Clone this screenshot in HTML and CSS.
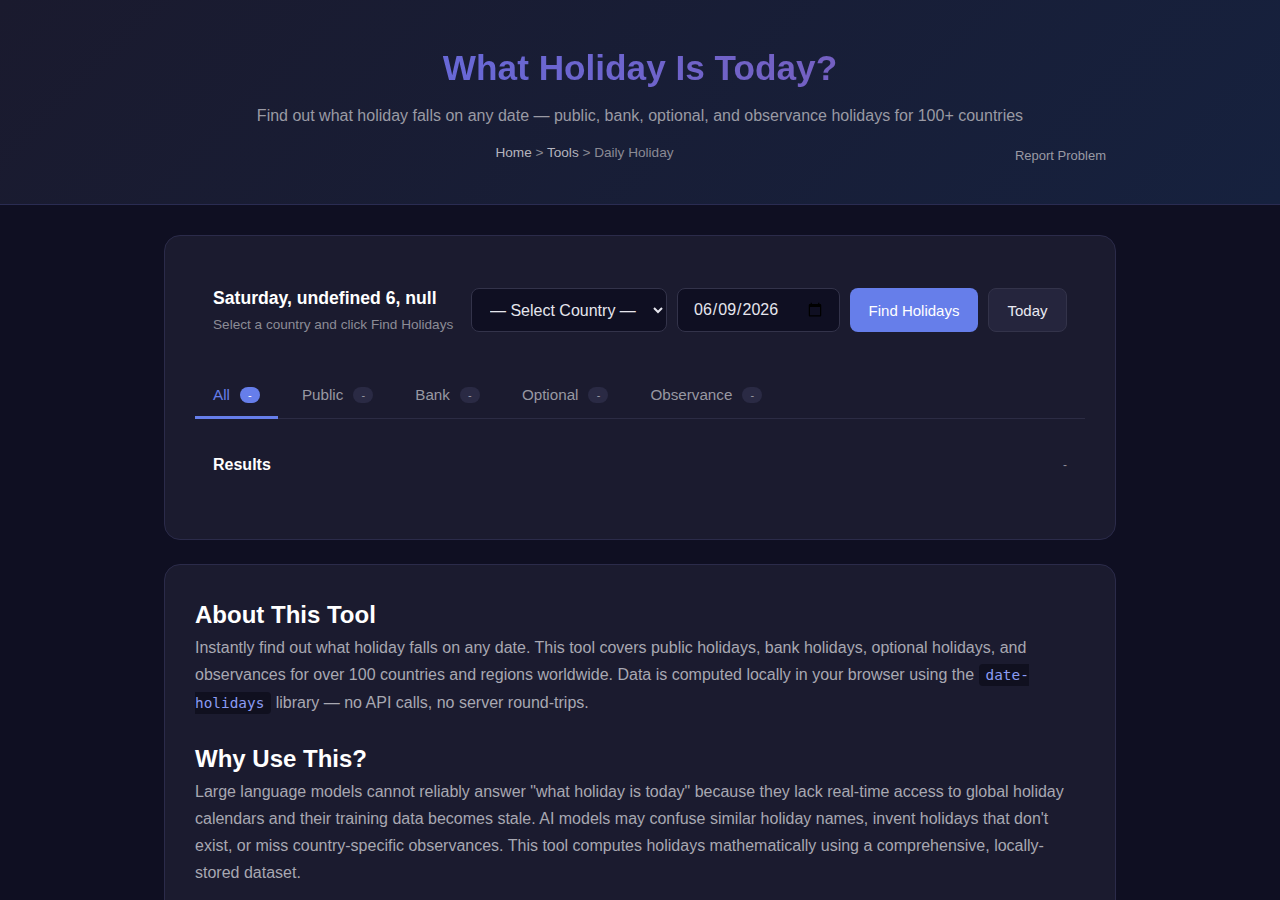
FILE: index.html
```html
<!DOCTYPE html>
<html>
<head>
<title>What Holiday Is Today?</title>
<link rel="stylesheet" href="styles.css">
</head>
<body>

<header class="hero">
    <div class="hero-inner">
        <h1 class="hero-title">What Holiday Is Today?</h1>
        <p class="hero-sub">Find out what holiday falls on any date — public, bank, optional, and observance holidays for 100+ countries</p>
        <div class="hero-bar">
            <nav class="crumbs">
                <a href="#">Home</a> &gt; <a href="#">Tools</a> &gt; <span>Daily Holiday</span>
            </nav>
            <a class="report" href="#">Report Problem</a>
        </div>
    </div>
</header>

<main class="page">
    <section class="card">
        <div class="controls">
            <div class="date-info">
                <div class="date-title">Saturday, undefined 6, null</div>
                <div class="date-hint">Select a country and click Find Holidays</div>
            </div>
            <div class="control-row">
                <select class="field country">
                    <option>— Select Country —</option>
                </select>
                <input type="date" class="field date" value="2026-06-09">
                <button class="btn btn-primary">Find Holidays</button>
                <button class="btn btn-ghost">Today</button>
            </div>
        </div>

        <div class="tabs">
            <div class="tab active">All <span class="count">-</span></div>
            <div class="tab">Public <span class="count">-</span></div>
            <div class="tab">Bank <span class="count">-</span></div>
            <div class="tab">Optional <span class="count">-</span></div>
            <div class="tab">Observance <span class="count">-</span></div>
        </div>

        <div class="results">
            <div class="results-head">
                <span class="results-title">Results</span>
                <span class="results-meta">-</span>
            </div>
        </div>
    </section>

    <section class="card info">
        <h2>About This Tool</h2>
        <p>Instantly find out what holiday falls on any date. This tool covers public holidays, bank holidays, optional holidays, and observances for over 100 countries and regions worldwide. Data is computed locally in your browser using the <code>date-holidays</code> library — no API calls, no server round-trips.</p>

        <h2>Why Use This?</h2>
        <p>Large language models cannot reliably answer "what holiday is today" because they lack real-time access to global holiday calendars and their training data becomes stale. AI models may confuse similar holiday names, invent holidays that don't exist, or miss country-specific observances. This tool computes holidays mathematically using a comprehensive, locally-stored dataset.</p>
    </section>
</main>

</body>
</html>
```

FILE: styles.css
```css
body {
    margin: 0;
    background: #0f0f22;
    color: #e8e8f0;
    font-family: "Liberation Sans", Arial, sans-serif;
}

/* header */
.hero {
    background: linear-gradient(135deg, #1a1a2e 0%, #16213e 100%);
    border-bottom: 1px solid #2a2c52;
    padding: 47px 20px 39px;
    text-align: center;
}
.hero-inner {
    max-width: 952px;
    margin: 0 auto;
}
.hero-title {
    margin: 0;
    font-size: 2.2rem;
    line-height: 1.2;
    font-weight: bold;
    background: linear-gradient(90deg, #6868d6, #7460c2);
    -webkit-background-clip: text;
    background-clip: text;
    color: transparent;
    display: inline-block;
}
.hero-sub {
    margin: 15px 0 0;
    font-size: 16px;
    line-height: 24px;
    color: #9a9aa4;
}
.hero-bar {
    display: flex;
    align-items: flex-start;
    gap: 10px;
    margin-top: 16px;
    padding-right: 10px;
}
.crumbs {
    flex: 1;
    font-size: 0.85rem;
    line-height: 18px;
    color: #8a8a94;
}
.crumbs a {
    color: #b4b4be;
    text-decoration: none;
}
.report {
    margin-top: 3px;
    font-size: 13px;
    line-height: 18px;
    color: #9a9aa4;
    text-decoration: none;
}

/* cards */
.page {
    width: 952px;
    margin: 0 auto;
    padding: 30px 0;
    display: flex;
    flex-direction: column;
    gap: 24px;
}
.card {
    background: #1b1b2f;
    border: 1px solid #2b2b4a;
    border-radius: 16px;
    padding: 30px;
}

.controls {
    display: flex;
    align-items: center;
    justify-content: space-between;
    padding: 19px 18px;
    margin-bottom: 21px;
}
.date-info {
    padding: 2px 0 1px;
}
.date-title {
    font-size: 1.1rem;
    line-height: 22px;
    font-weight: bold;
    color: #fff;
}
.date-hint {
    margin-top: 7px;
    font-size: 0.85rem;
    line-height: 18px;
    color: #8c8c96;
}
.control-row {
    display: flex;
    gap: 10px;
}
.field {
    height: 44px;
    box-sizing: border-box;
    background: #0f0f22;
    border: 1px solid #33334a;
    border-radius: 8px;
    color: #e6e6ee;
    font-family: "Liberation Sans", Arial, sans-serif;
    font-size: 16px;
}
.country {
    width: 196px;
    padding: 0 12px 0 14px;
}
.date {
    width: 163px;
    padding: 0 14px 0 15px;
}
.btn {
    height: 44px;
    border-radius: 8px;
    font-family: "Liberation Sans", Arial, sans-serif;
    font-size: 15px;
    cursor: pointer;
}
.btn-primary {
    width: 128px;
    background: #667eea;
    border: none;
    color: #fff;
}
.btn-ghost {
    width: 79px;
    background: #25253d;
    border: 1px solid #33334a;
    color: #eaeaf2;
}

/* tabs */
.tabs {
    display: flex;
    gap: 6px;
    border-bottom: 1px solid #2c2c44;
}
.tab {
    display: flex;
    align-items: center;
    gap: 10px;
    padding: 12px 18px 13px;
    font-size: 0.95rem;
    line-height: 17px;
    color: #9898a2;
    border-bottom: 3px solid transparent;
    margin-top: -1px;
    margin-bottom: -1px;
    cursor: pointer;
}
.tab.active {
    color: #667eea;
    border-bottom-color: #667eea;
}
.count {
    min-width: 20px;
    height: 16px;
    line-height: 16px;
    border-radius: 8px;
    background: #2a2a44;
    color: #9a9aa4;
    font-size: 11px;
    text-align: center;
}
.tab.active .count {
    background: #667eea;
    color: #fff;
}

/* results */
.results {
    padding: 36px 18px 34px;
}
.results-head {
    display: flex;
    justify-content: space-between;
    align-items: center;
    line-height: 20px;
}
.results-title {
    font-size: 16px;
    font-weight: bold;
    color: #fff;
}
.results-meta {
    font-size: 12px;
    color: #8c8c96;
}

/* about */
.info {
    padding-top: 34px;
}
.info h2 {
    margin: 0 0 4px;
    font-size: 24px;
    line-height: 31px;
    color: #fff;
}
.info p {
    margin: 0 0 26px;
    font-size: 16px;
    line-height: 27px;
    color: #a8a8b2;
}
.info code {
    font-family: "DejaVu Sans Mono", monospace;
    font-size: 0.9rem;
    background: #10101f;
    color: #8b9cf4;
    padding: 3px 7px;
    border-radius: 4px;
}
```
